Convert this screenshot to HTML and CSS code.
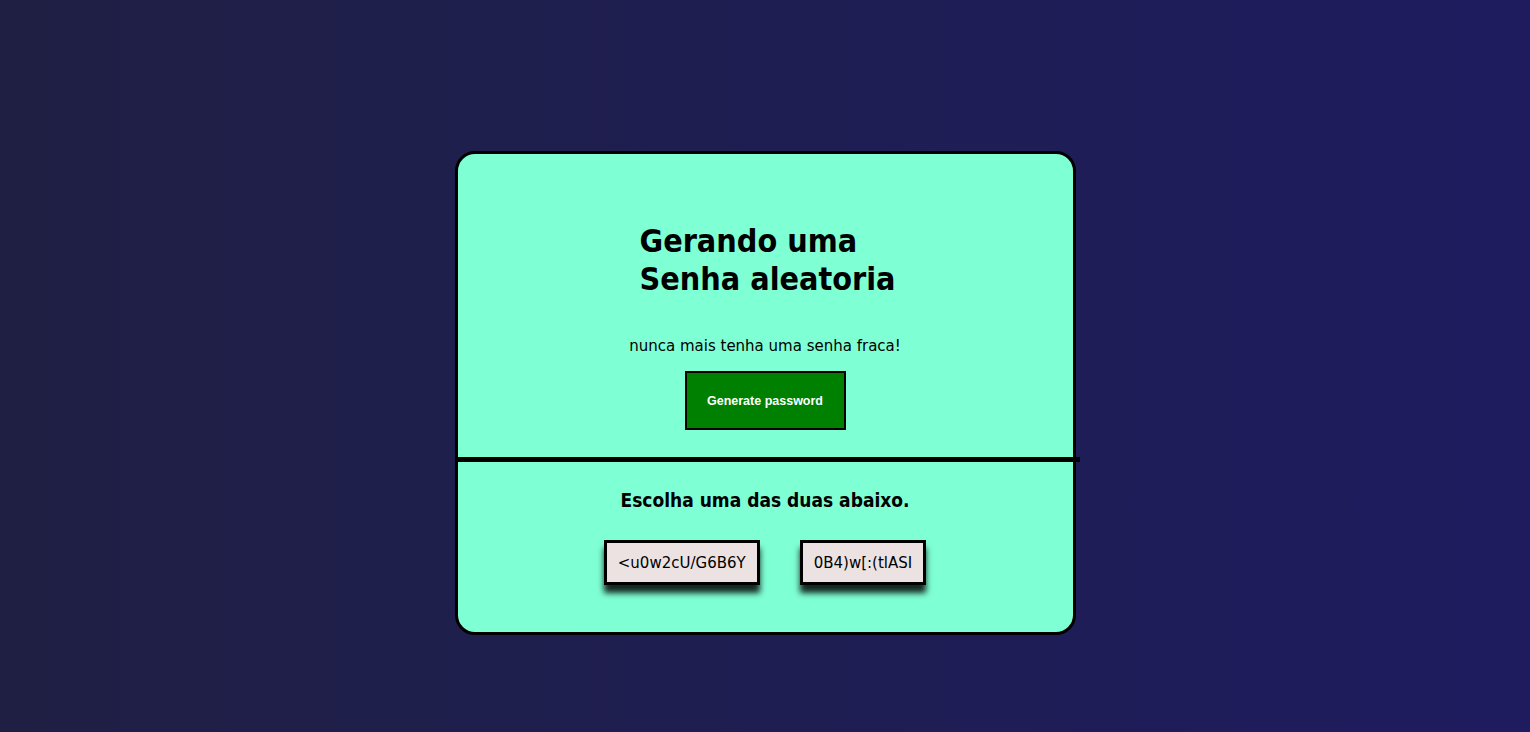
FILE: index.html
```html
<!DOCTYPE html>
<html lang="pt">
<head>
<meta charset="utf-8">
<title>Gerador de senha</title>
<link rel="stylesheet" href="styles.css">
</head>
<body>
<main class="card">
  <section class="top">
    <h1 class="title">Gerando uma<br>Senha aleatoria</h1>
    <p class="subtitle">nunca mais tenha uma senha fraca!</p>
    <button class="generate" type="button">Generate password</button>
  </section>
  <div class="divider"></div>
  <section class="bottom">
    <h2 class="choose">Escolha uma das duas abaixo.</h2>
    <div class="options">
      <div class="pw">&lt;u0w2cU/G6B6Y</div>
      <div class="pw">0B4)w[:(tlASI</div>
    </div>
  </section>
</main>
</body>
</html>
```

FILE: styles.css
```css
html, body {
  margin: 0;
  padding: 0;
}
body {
  min-height: 732px;
  background: linear-gradient(to right, #1f1f44, #1e1c5f);
  font-family: "DejaVu Sans", "Noto Sans", sans-serif;
  color: #000;
  overflow: hidden;
}
.card {
  box-sizing: border-box;
  width: 621px;
  height: 484px;
  margin: 151px auto 0;
  border: 3px solid #000;
  border-radius: 20px;
  background: #7fffd4;
  display: flex;
  flex-direction: column;
}
.top {
  height: 303px;
  display: flex;
  flex-direction: column;
  align-items: center;
}
.title {
  width: 251px;
  margin: 68px 0 0;
  font-family: "DejaVu Sans Condensed", "DejaVu Sans", sans-serif;
  font-stretch: condensed;
  font-size: 32px;
  line-height: 38px;
  font-weight: bold;
  text-align: left;
  white-space: nowrap;
}
.subtitle {
  margin: 38px 0 0;
  font-size: 15px;
  line-height: 20px;
}
.generate {
  margin-top: 15px;
  width: 161px;
  height: 59px;
  border: 2px solid #000;
  background: #008000;
  color: #fff;
  font-family: "Liberation Sans", Arial, sans-serif;
  font-weight: bold;
  font-size: 12.5px;
  padding: 0;
}
.divider {
  height: 5px;
  background: #000;
  margin: 0 -7px 0 -3px;
}
.bottom {
  display: flex;
  flex-direction: column;
  align-items: center;
}
.choose {
  margin: 26px 0 0;
  font-family: "DejaVu Sans Condensed", "DejaVu Sans", sans-serif;
  font-stretch: condensed;
  font-size: 19px;
  line-height: 24px;
  font-weight: bold;
}
.options {
  display: flex;
  gap: 40px;
  margin-top: 28px;
}
.pw {
  height: 45px;
  box-sizing: border-box;
  border: 3px solid #000;
  background: #ece2e2;
  padding: 0 11px;
  display: flex;
  align-items: center;
  font-size: 15px;
  box-shadow: 0 8px 6px rgba(0, 0, 0, 0.85);
}
```
